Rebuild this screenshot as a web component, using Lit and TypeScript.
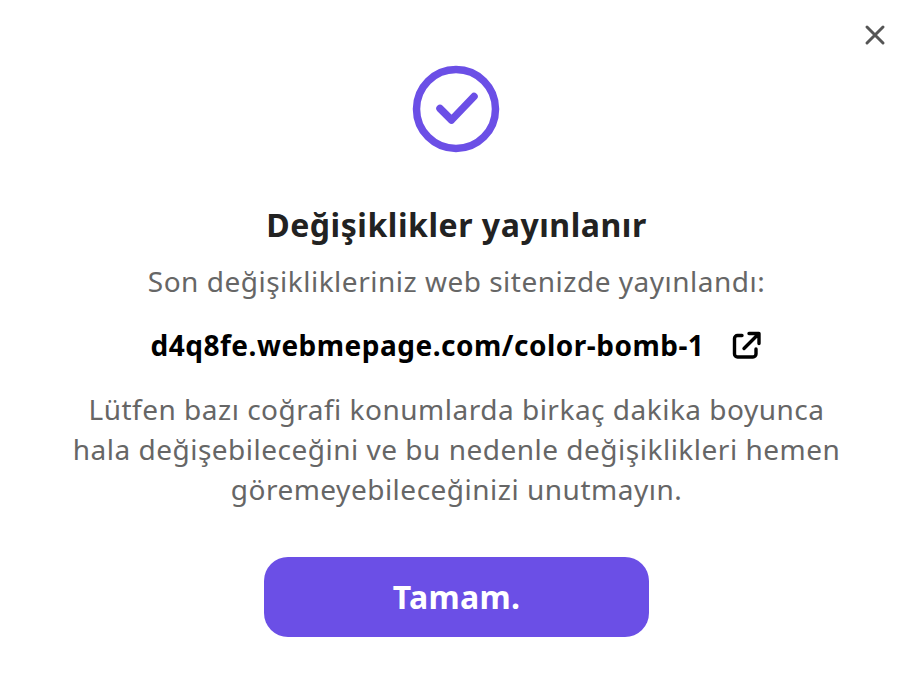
import { LitElement, html, css } from "lit";
import { customElement } from "lit/decorators.js";

@customElement("app-root")
export class AppRoot extends LitElement {
  static styles = css`
    :host { display: block; width: 914px; height: 686px; background: #fff; position: relative; font-family: "Noto Sans", sans-serif; overflow: hidden; }
    .close { position: absolute; top: 21px; right: 25px; width: 28px; height: 28px; padding: 0; border: 0; background: none; }
    .close svg { display: block; }
    .main { display: flex; flex-direction: column; align-items: center; padding: 65px 1px 0 0; text-align: center; }
    .check { display: block; width: 88px; height: 88px; margin-right: 1px; }
    h1 { margin: 52px 0 0; font-size: 32px; line-height: 40px; font-weight: 700; color: #222; letter-spacing: 0.55px; }
    .sub { margin: 16px 0 0; font-size: 28px; line-height: 40px; color: #666; letter-spacing: 0.5px; }
    .link { display: flex; align-items: center; gap: 26px; margin-top: 24px; font-size: 28px; line-height: 40px; font-weight: 700; color: #000; letter-spacing: 0.5px; }
    .link svg { width: 32px; height: 32px; }
    .note { margin: 24px 0 0; font-size: 28px; line-height: 40px; color: #666; letter-spacing: 0.5px; }
    .ok { margin-top: 48px; width: 385px; height: 80px; padding: 0 0 2px; border: 0; border-radius: 24px; background: #6b4fe6; color: #fff; font: 700 32px "Noto Sans", sans-serif; letter-spacing: 0.3px; }
  `;
  render() {
    return html`
      <button class="close" aria-label="Kapat">
        <svg viewBox="0 0 28 28" width="28" height="28"><path d="M6 6 L22 22 M22 6 L6 22" stroke="#555" stroke-width="3" stroke-linecap="round" fill="none"/></svg>
      </button>
      <div class="main">
        <svg class="check" viewBox="0 0 88 88"><circle cx="44" cy="44" r="39.5" fill="none" stroke="#6b4fe6" stroke-width="7.5"/><path d="M28 43.5 L39.5 55 L62 31.5" fill="none" stroke="#6b4fe6" stroke-width="7.5" stroke-linecap="round" stroke-linejoin="round"/></svg>
        <h1>Değişiklikler yayınlanır</h1>
        <p class="sub">Son değişiklikleriniz web sitenizde yayınlandı:</p>
        <div class="link"><span>d4q8fe.webmepage.com/color-bomb-1</span>
          <svg viewBox="0 0 32 32"><path d="M12 6.5 H7.5 a3 3 0 0 0 -3 3 V25 a3 3 0 0 0 3 3 H23 a3 3 0 0 0 3 -3 V20 M19 4.5 H29 V14.5 M28.5 5 L14 19.5" fill="none" stroke="#000" stroke-width="3.4" stroke-linecap="round" stroke-linejoin="round"/></svg>
        </div>
        <p class="note">Lütfen bazı coğrafi konumlarda birkaç dakika boyunca<br>hala değişebileceğini ve bu nedenle değişiklikleri hemen<br>göremeyebileceğinizi unutmayın.</p>
        <button class="ok">Tamam.</button>
      </div>
    `;
  }
}
